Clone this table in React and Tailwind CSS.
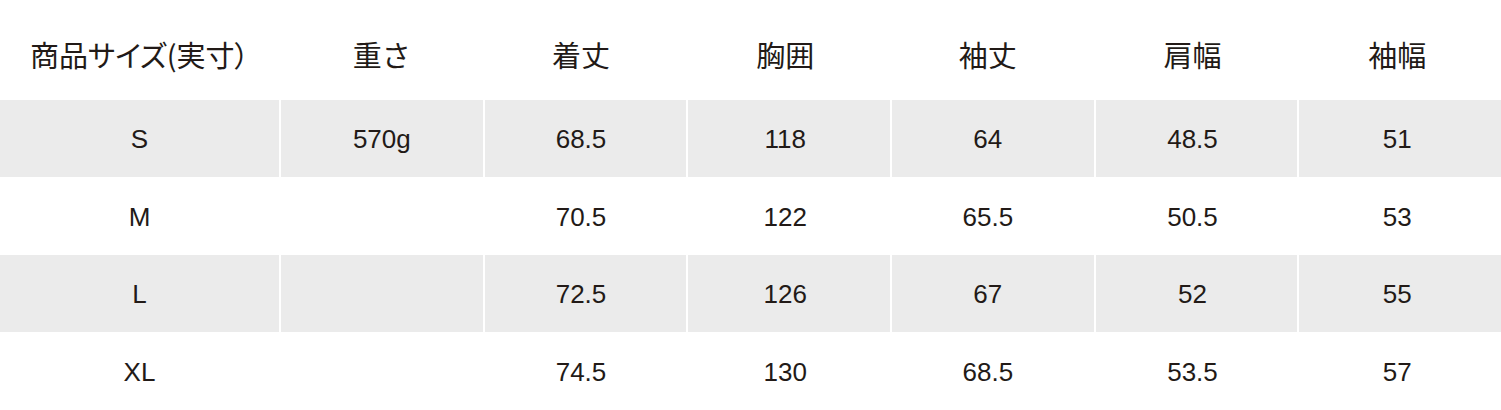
import React from "react";

const headers = ["商品サイズ(実寸）", "重さ", "着丈", "胸囲", "袖丈", "肩幅", "袖幅"];
const rows = [
  ["S", "570g", "68.5", "118", "64", "48.5", "51"],
  ["M", "", "70.5", "122", "65.5", "50.5", "53"],
  ["L", "", "72.5", "126", "67", "52", "55"],
  ["XL", "", "74.5", "130", "68.5", "53.5", "57"],
];

const shift = ["", "", "pr-[9px]", "pr-[8px]", "pr-[10px]", "pr-[8px]", "pr-[6px]"];

export default function App() {
  return (
    <div className="w-[1501px] h-[410px] bg-white text-[#221a17] overflow-hidden">
      <div className="grid grid-cols-[279px_repeat(6,1fr)] gap-x-[2px] h-[100px] pt-[9px]">
        {headers.map((h, i) => (
          <div
            key={i}
            className={
              "flex items-center justify-center text-[29px] leading-none " +
              shift[i] +
              (i === 0 ? " [font-feature-settings:'palt']" : "")
            }
            style={{ fontFamily: '"Noto Sans CJK JP", "Noto Sans", sans-serif' }}
          >
            {h}
          </div>
        ))}
      </div>
      {rows.map((r, ri) => (
        <div
          key={ri}
          className={
            "grid grid-cols-[279px_repeat(6,1fr)] gap-x-[2px] " +
            (ri % 2 === 1 ? "h-[78px]" : "h-[77px]")
          }
        >
          {r.map((c, ci) => (
            <div
              key={ci}
              className={
                "flex items-center justify-center text-[26px] leading-none pt-[1px] " +
                shift[ci] +
                " " +
                (ri % 2 === 0 ? "bg-[#ebebeb]" : "bg-white")
              }
              style={{ fontFamily: '"Liberation Sans", Arial, sans-serif' }}
            >
              {c}
            </div>
          ))}
        </div>
      ))}
    </div>
  );
}
